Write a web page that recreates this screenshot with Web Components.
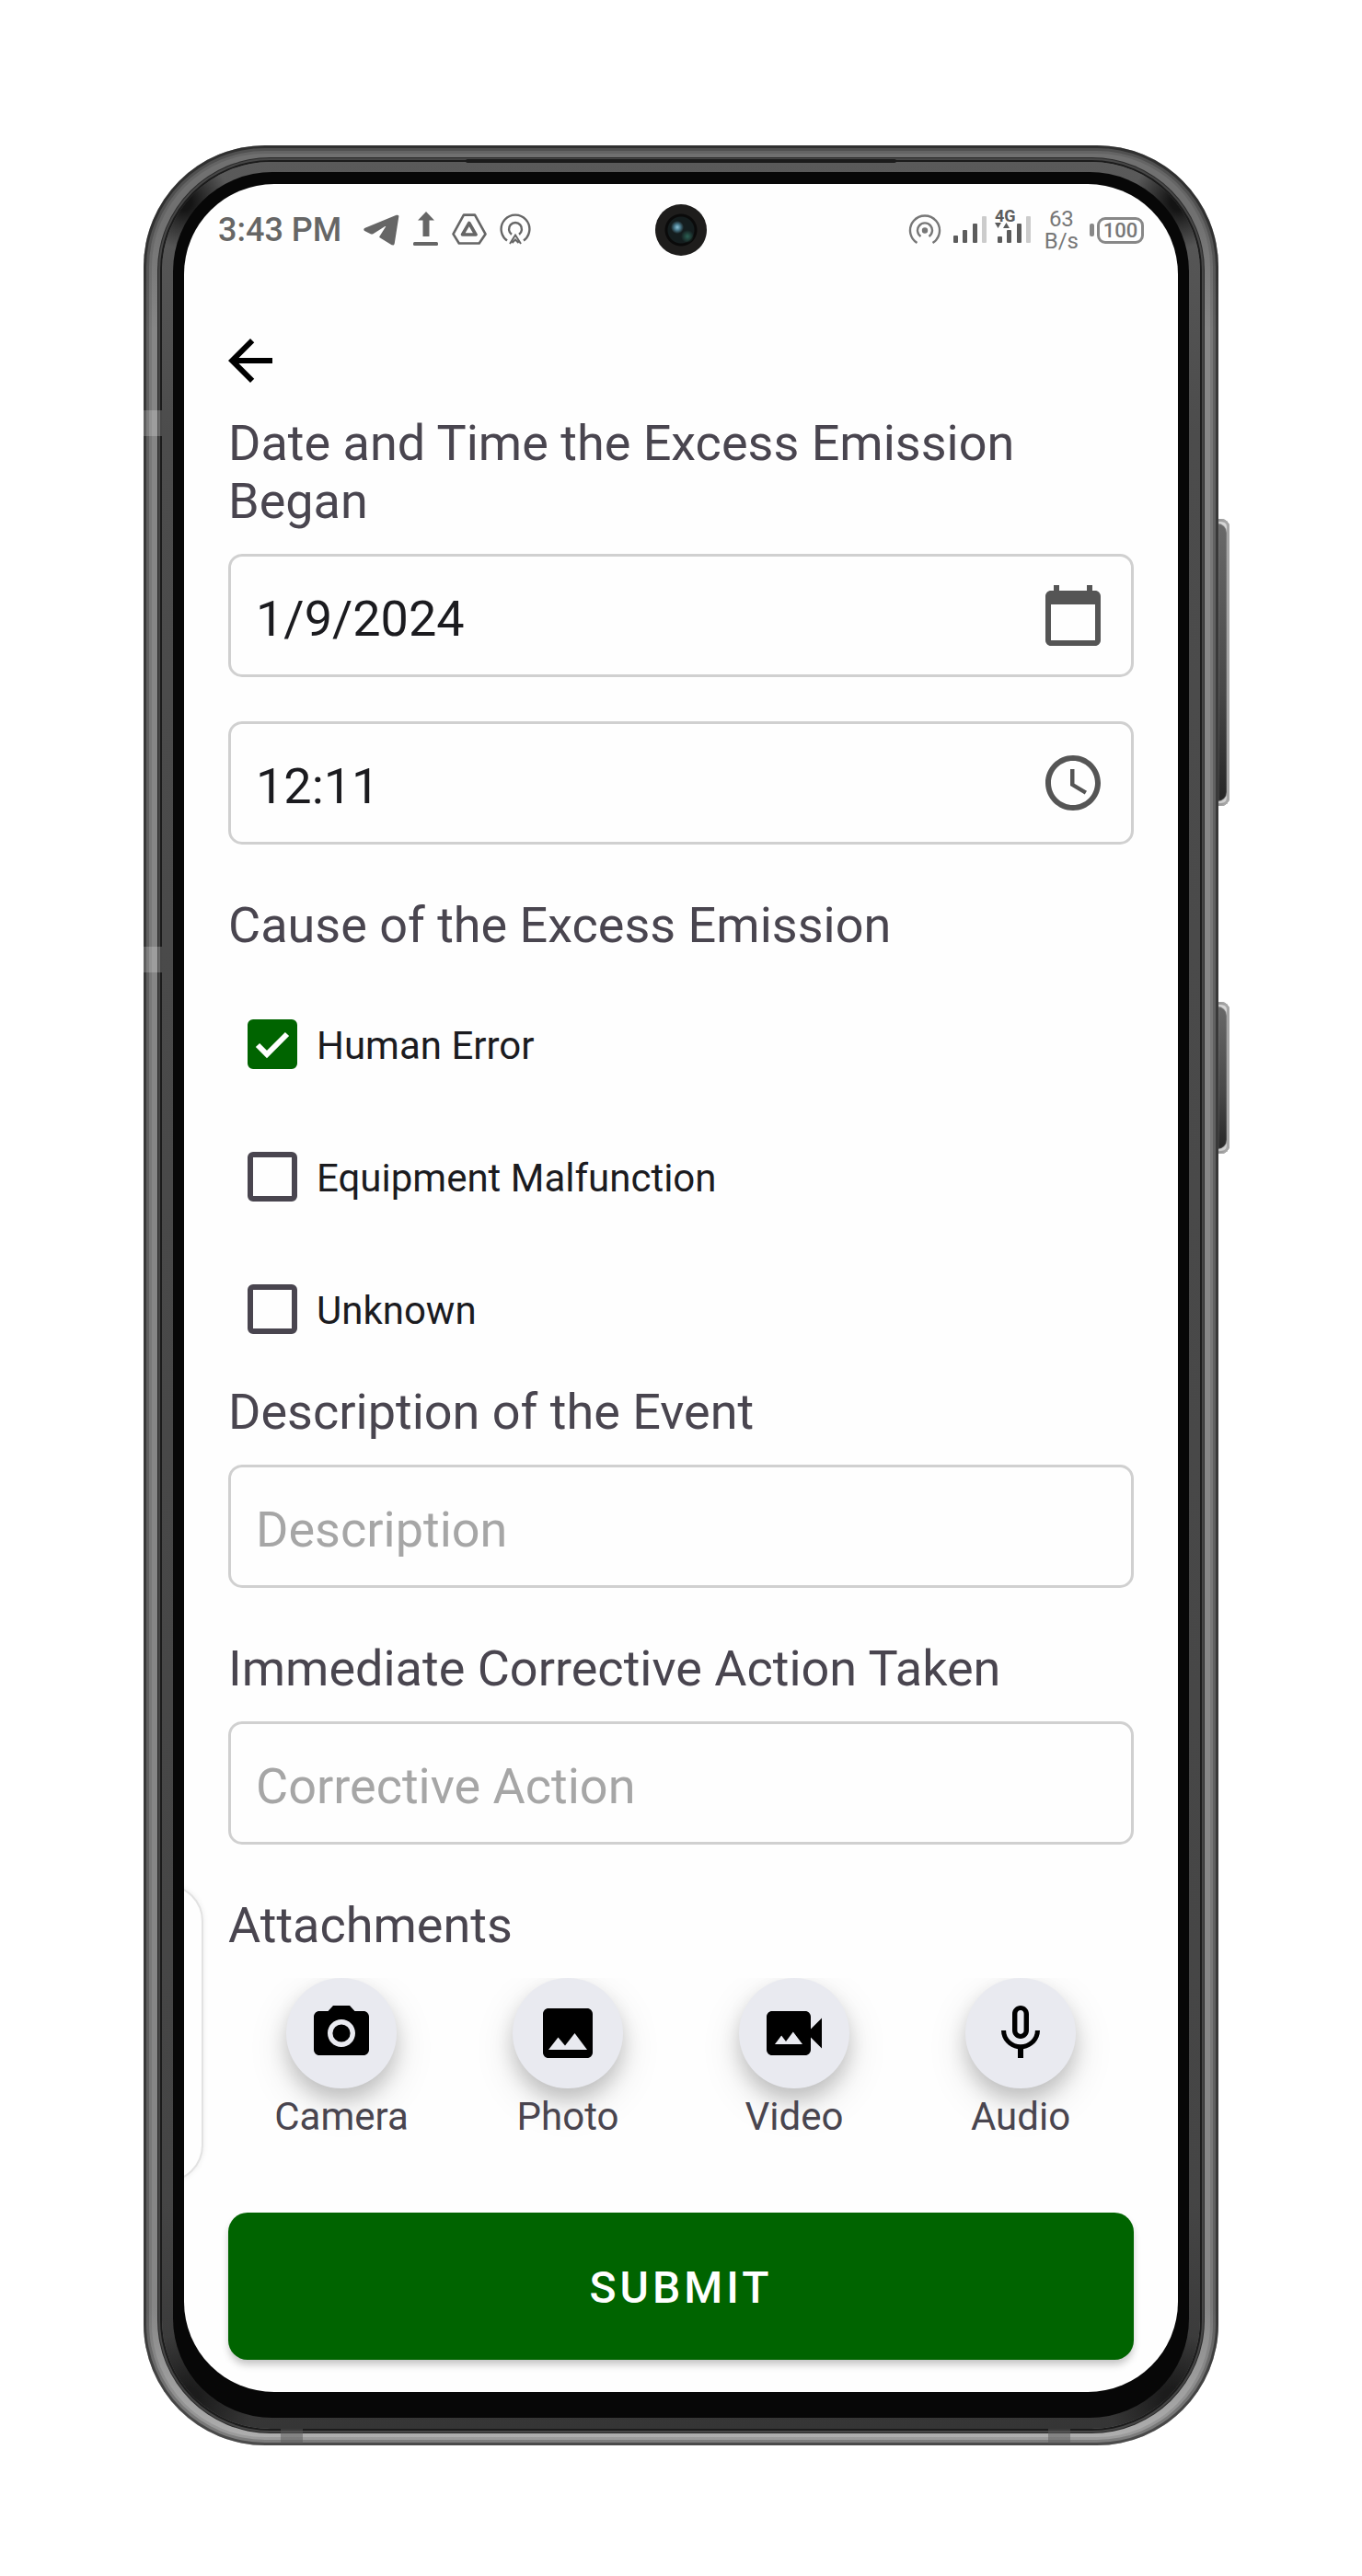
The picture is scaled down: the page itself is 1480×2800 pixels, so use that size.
<!DOCTYPE html>
<html lang="en">
<head>
<meta charset="utf-8">
<meta name="viewport" content="width=device-width, initial-scale=1">
<title>Excess Emission Report</title>
<style>
  body { margin: 0; background: #fff; font-family: Roboto, "Liberation Sans", sans-serif; }
  .stack { display: flex; flex-direction: column; }
  .form { gap: 56px; }
  .pair { gap: 48px; }
  .cause { gap: 8px; }
</style>
</head>
<body>
<phone-frame>
  <status-bar></status-bar>
  <report-form>
    <div class="stack form">
      <div class="stack pair">
        <form-field label="Date and Time the Excess Emission Began" value="1/9/2024" icon="calendar"></form-field>
        <form-field name="Time" value="12:11" icon="clock"></form-field>
      </div>
      <div class="stack cause">
        <check-group label="Cause of the Excess Emission">
          <check-row checked>Human Error</check-row>
          <check-row>Equipment Malfunction</check-row>
          <check-row>Unknown</check-row>
        </check-group>
        <form-field label="Description of the Event" placeholder="Description"></form-field>
      </div>
      <form-field label="Immediate Corrective Action Taken" placeholder="Corrective Action"></form-field>
      <attachment-bar label="Attachments">
        <attach-button icon="camera">Camera</attach-button>
        <attach-button icon="photo">Photo</attach-button>
        <attach-button icon="video">Video</attach-button>
        <attach-button icon="mic">Audio</attach-button>
      </attachment-bar>
    </div>
    <submit-button slot="footer">SUBMIT</submit-button>
  </report-form>
</phone-frame>

<script>
const ICONS = {
  back: 'M20 11H7.83l5.59-5.59L12 4l-8 8 8 8 1.41-1.41L7.83 13H20v-2z',
  calendar: 'M20 3h-1V1h-2v2H7V1H5v2H4c-1.1 0-2 .9-2 2v16c0 1.1.9 2 2 2h16c1.1 0 2-.9 2-2V5c0-1.1-.9-2-2-2zm0 18H4V8h16v13z',
  clock: 'M11.99 2C6.47 2 2 6.48 2 12s4.47 10 9.99 10C17.52 22 22 17.52 22 12S17.52 2 11.99 2zM12 20c-4.42 0-8-3.58-8-8s3.58-8 8-8 8 3.58 8 8-3.58 8-8 8zM12.5 7H11v6l5.25 3.15.75-1.23-4.5-2.67z',
  camera: 'M9 2 7.17 4H4c-1.1 0-2 .9-2 2v12c0 1.1.9 2 2 2h16c1.1 0 2-.9 2-2V6c0-1.1-.9-2-2-2h-3.17L15 2H9zm3 15c-2.76 0-5-2.24-5-5s2.24-5 5-5 5 2.24 5 5-2.24 5-5 5zM15.2 12a3.2 3.2 0 1 1-6.4 0 3.2 3.2 0 0 1 6.4 0z',
  photo: 'M21 19V5c0-1.1-.9-2-2-2H5c-1.1 0-2 .9-2 2v14c0 1.1.9 2 2 2h14c1.1 0 2-.9 2-2zM8.5 13.5l2.5 3.01L14.5 12l4.5 6H5l3.5-4.5z',
  video: 'M18 10.48V6c0-1.1-.9-2-2-2H4c-1.1 0-2 .9-2 2v12c0 1.1.9 2 2 2h12c1.1 0 2-.9 2-2v-4.48l4 3.98v-11l-4 3.98zM5 16l2.38-3.17L9 15l2.62-3.5L15 16H5z',
  mic: 'M12 14c1.66 0 2.99-1.34 2.99-3L15 5c0-1.66-1.34-3-3-3S9 3.34 9 5v6c0 1.66 1.34 3 3 3zm-1.2-9.1c0-.66.54-1.2 1.2-1.2.66 0 1.2.54 1.2 1.2l-.01 6.2c0 .66-.53 1.2-1.19 1.2-.66 0-1.2-.54-1.2-1.2V4.9zm6.5 6.1c0 3-2.54 5.1-5.3 5.1S6.7 14 6.7 11H5c0 3.41 2.72 6.23 6 6.72V21h2v-3.28c3.28-.48 6-3.3 6-6.72h-1.7z'
};
const glyph = name => `<svg width="72" height="72" viewBox="0 0 24 24" fill="currentColor" aria-hidden="true"><path fill-rule="evenodd" d="${ICONS[name]}"/></svg>`;

const define = (tag, render) => customElements.define(tag, class extends HTMLElement {
  constructor() { super(); this.attachShadow({ mode: 'open' }); }
  connectedCallback() {
    this.shadowRoot.innerHTML = `<style>*{box-sizing:border-box}svg{display:block;flex:none}</style>` + render(this);
  }
});

const HEADING = 'margin:0;font-size:54px;line-height:63px;font-weight:400;color:#49454f;';

define('phone-frame', () => `
<style>
  :host { display:block; max-width:1168px; margin:158px auto 142px; position:relative; }
  .rim { position:relative; padding:18px 20px 18px; border-radius:132px;
    background:linear-gradient(180deg,#707070 0,#707070 3%,#868686 8%,#868686 94%,#b0b0b0 100%);
    box-shadow:inset 0 0 0 3px rgba(0,0,0,.4), inset 0 0 0 6px rgba(0,0,0,.2), inset 0 0 0 9px rgba(0,0,0,.1); }
  .band { padding:11px 12px 12px; border-radius:118px;
    background:
      radial-gradient(circle at 24px 44px, #141414 8px, transparent 50px),
      radial-gradient(circle at calc(100% - 24px) 44px, #141414 8px, transparent 50px),
      radial-gradient(circle at 30px calc(100% - 34px), #1c1c1c 10px, transparent 70px),
      radial-gradient(circle at calc(100% - 30px) calc(100% - 34px), #1c1c1c 10px, transparent 70px),
      linear-gradient(180deg,#5a5a5a,#4c4c4c 12%,#454545 90%,#353535);
    box-shadow:0 0 0 2px #1b1b1b, 0 0 0 4px #464646, 0 0 0 5px #2a2a2a; }
  .bezel { padding:13px 12px 28px; border-radius:108px; background:#070707; }
  .screen { position:relative; overflow:hidden; border-radius:98px; background:#fefefe; }
  .handle { position:absolute; left:-60px; top:1848px; width:81px; height:324px; border-radius:48px; background:#fefefe;
    border:2px solid #e2e2e2; box-shadow:0 0 6px rgba(0,0,0,.08); }
  .key { position:absolute; right:-12px; width:12px; border-radius:0 9px 9px 0;
    background:linear-gradient(180deg,#6a6a6a,#484848 60%,#242424);
    box-shadow:inset -3px 0 0 #a6a6a6, inset 0 3px 1px #9a9a9a, inset 0 -3px 1px #9a9a9a, inset -4px 6px 1px -1px #d8d8d8, inset -4px -6px 1px -1px #d0d0d0; }
  .volume { top:406px; height:312px; }
  .power { top:931px; height:165px; }
  .antenna { position:absolute; left:0; width:20px; height:28px; background:rgba(255,255,255,.2); }
  .a1 { top:288px; } .a2 { top:871px; }
  .foot { position:absolute; bottom:2px; width:24px; height:16px; background:rgba(90,90,90,.5); }
  .f1 { left:149px; } .f2 { right:161px; }
  .speaker { position:absolute; top:15px; left:30%; right:30%; height:4px; background:#1b1b1b; border-radius:2px; }
</style>
<div class="key volume"></div><div class="key power"></div>
<div class="rim">
  <div class="band"><div class="bezel"><div class="screen"><div class="handle"></div><slot></slot></div></div></div>
  <div class="speaker"></div>
  <div class="antenna a1"></div><div class="antenna a2"></div>
  <div class="foot f1"></div><div class="foot f2"></div>
</div>`);

define('status-bar', () => `
<style>
  :host { display:grid; grid-template-columns:1fr auto 1fr; align-items:center; height:100px; padding:0 37px; color:#666; }
  .side { display:flex; align-items:center; gap:14px; }
  .end { justify-content:flex-end; gap:12px; color:#777; }
  .time { font-size:36px; line-height:42px; font-weight:500; margin-right:10px; white-space:nowrap; }
  .lens { width:56px; height:56px; border-radius:50%;
    background:
      radial-gradient(circle at 24px 25px, #8fc4d8 0, #4d7f92 3px, transparent 7px),
      radial-gradient(circle at 35px 35px, #2c6154 0, transparent 7px),
      radial-gradient(circle, #141d1e 0 14px, #0a0a0a 15px 17px, #1e1d1c 18px); }
  .rate { font-size:24px; line-height:24px; text-align:center; }
  .rate span { display:block; }
  .battery { display:flex; align-items:center; gap:3px; }
  .nub { width:5px; height:14px; border-radius:2px; background:#888; }
  .cell { height:29px; width:51px; border:3px solid #888; border-radius:9px; font-size:22px; line-height:24px; font-weight:500; text-align:center; }
</style>
<div class="side">
  <span class="time">3:43 PM</span>
  <svg width="40" height="40"><path d="M2 20.500Q0 19.500 2 18.500L36 4.500Q38 4 37.500 6L33 34.500Q32.500 36.500 31 35.500L18 27.500L26.500 14Q26.500 13 25 14L10 23.500Q9 24 8 23.500Z" fill="#666" stroke="#666" stroke-width="1.500" stroke-linejoin="round"/></svg>
  <svg width="28" height="40" fill="#666"><path d="M14 0 23 9.500H17.500V27H10.500V9.500H5Z"/><rect y="33" width="27" height="4" rx="1.500"/></svg>
  <svg width="38" height="40" fill="none" stroke="#666" stroke-linejoin="round"><path stroke-width="2.600" d="M12.900 3.600H25L36.500 24.400 29.700 34.500H7.800L1.500 24.400Z"/><path stroke-width="3.600" d="M18.800 12.500 26 25H11.500Z"/></svg>
  <svg width="34" height="40" fill="none" stroke="#666" stroke-width="2.400"><path d="M8 31.500A15.400 15.400 0 1 1 26 31.500"/><path d="M13 24.800A7 7 0 1 1 21 24.800"/><path d="M11 35 17 25.500 23 35M13.500 34 17 30.500 20.500 34" stroke-width="2"/></svg>
</div>
<div class="lens"></div>
<div class="side end">
  <svg width="36" height="40" fill="none" stroke="#777" stroke-width="2.400"><path d="M9.500 34A16 16 0 1 1 26.500 34"/><path d="M13.500 27A8 8 0 1 1 22.500 27"/><circle cx="18" cy="20.500" r="2" fill="#777"/></svg>
  <svg width="88" height="56" viewBox="0 -8 88 56" fill="#5c5c5c">
    <g><rect x="1" y="26" width="5" height="8" rx="1"/><rect x="11" y="20" width="5" height="14" rx="1"/><rect x="22" y="13" width="5" height="21" rx="1"/><rect x="32" y="5" width="5" height="29" rx="1" fill="#ccc"/></g>
    <g><rect x="49" y="27" width="5" height="7" rx="1"/><rect x="59" y="20" width="5" height="14" rx="1"/><rect x="70" y="13" width="5" height="21" rx="1"/><rect x="80" y="5" width="5" height="29" rx="1" fill="#ccc"/></g>
    <path d="M46 12H53L49.500 18Z M55 18H62L58.500 12Z"/>
    <text x="46" y="11" font-size="18" font-weight="700">4G</text>
  </svg>
  <div class="rate"><span>63</span><span>B/s</span></div>
  <div class="battery"><span class="nub"></span><span class="cell">100</span></div>
</div>`);

define('report-form', () => `
<style>
  :host { display:block; padding:56px 48px 35px; position:relative; }
  .back { display:block; width:72px; height:72px; margin:0 0 22px -12px; padding:0; border:0; background:none; color:#000; }
  form { display:block; }
  footer { margin-top:80px; }
</style>
<button class="back" type="button" aria-label="Back">${glyph('back')}</button>
<slot></slot>
<footer><slot name="footer"></slot></footer>`);

define('form-field', el => {
  const a = n => el.getAttribute(n) || '';
  return `
<style>
  :host { display:block; }
  label { display:block; ${HEADING} margin-bottom:26px; }
  .box { display:flex; align-items:center; height:134px; padding:0 27px; border:3px solid #d0d0d0; border-radius:15px; color:#555; }
  input { flex:1; min-width:0; height:128px; padding:6px 0 0; border:0; outline:0; background:none; font:400 54px/63px Roboto,"Liberation Sans",sans-serif; color:#1b1b1f; }
  input::placeholder { color:#a6a6a6; opacity:1; }
</style>
${a('label') ? `<label for="f">${a('label')}</label>` : ''}
<div class="box"><input id="f" type="text" value="${a('value')}" placeholder="${a('placeholder')}" ${a('name') ? `aria-label="${a('name')}"` : ''}>${a('icon') ? glyph(a('icon')) : ''}</div>`;
});

define('check-group', el => `
<style>
  :host { display:block; }
  h2 { ${HEADING} margin-bottom:26px; }
</style>
<div role="group" aria-labelledby="h"><h2 id="h">${el.getAttribute('label')}</h2><slot></slot></div>`);

define('check-row', el => `
<style>
  :host { display:block; }
  label { display:flex; align-items:center; gap:21px; height:144px; padding-left:21px; font-size:42px; line-height:49px; color:#1b1b1f; }
  .mark { display:grid; flex:none; }
  .mark > * { grid-area:1/1; }
  input { appearance:none; width:54px; height:54px; margin:0; border:6px solid #49454f; border-radius:6px; }
  input:checked { background:#006400; border-color:#006400; }
  svg { pointer-events:none; visibility:hidden; }
  input:checked + svg { visibility:visible; }
  .text { padding-top:2px; }
</style>
<label><span class="mark"><input type="checkbox" ${el.hasAttribute('checked') ? 'checked' : ''}><svg width="54" height="54" fill="none" stroke="#fff" stroke-width="6"><path d="M11 28 21 38 43 16"/></svg></span><span class="text"><slot></slot></span></label>`);

define('attachment-bar', el => `
<style>
  :host { display:block; }
  h2 { ${HEADING} margin-bottom:26px; }
  .row { display:grid; grid-template-columns:repeat(4,1fr); }
</style>
<h2>${el.getAttribute('label')}</h2><div class="row"><slot></slot></div>`);

define('attach-button', el => `
<style>
  :host { display:block; clip-path:inset(0 0 0 0); }
  button { display:flex; flex-direction:column; align-items:center; gap:6px; width:100%; padding:0; border:0; background:none;
    font:400 42px/49px Roboto,"Liberation Sans",sans-serif; color:#49454f; }
  .disc { display:grid; place-items:center; width:120px; height:120px; border-radius:50%; background:#e9eaf0; color:#000;
    box-shadow:0 16px 44px rgba(0,0,0,.13), 0 12px 20px rgba(0,0,0,.16); }
  .text { position:relative; }
</style>
<button type="button"><span class="disc">${glyph(el.getAttribute('icon'))}</span><span class="text"><slot></slot></span></button>`);

define('submit-button', () => `
<style>
  :host { display:block; }
  button { display:block; width:100%; height:160px; padding:4px 0 0; border:0; border-radius:21px; background:#006400; color:#fff;
    font:500 48px/56px Roboto,"Liberation Sans",sans-serif; letter-spacing:4px; box-shadow:0 6px 8px -1px rgba(0,0,0,.24); }
</style>
<button type="submit"><slot></slot></button>`);
</script>
</body>
</html>
